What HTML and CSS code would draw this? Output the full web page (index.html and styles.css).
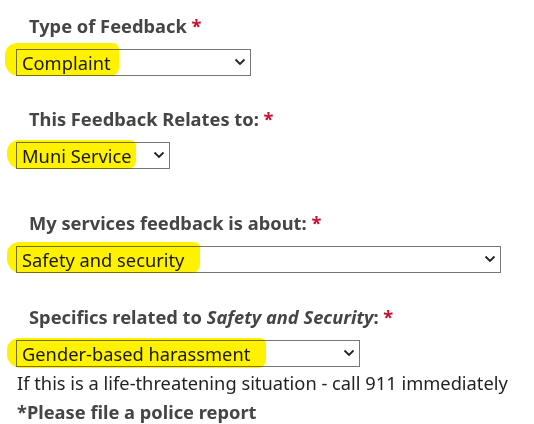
FILE: index.html
```html
<!DOCTYPE html>
<html lang="en">
<head>
    <meta charset="UTF-8">
    <meta name="viewport" content="width=device-width, initial-scale=1.0">
    <title>Feedback</title>
    <link rel="stylesheet" href="styles.css">
</head>
<body>
    <form class="feedback-form">
        <div class="field field-type">
            <label for="feedbackType">Type of Feedback <span class="req">*</span></label>
            <div class="select-wrap">
                <select id="feedbackType" class="select-type">
                    <option>Complaint</option>
                </select>
                <svg class="chevron" width="12" height="8" viewBox="0 0 12 8"><path d="M1.5 1.5 L6 6 L10.5 1.5" fill="none" stroke="#222" stroke-width="1.8"/></svg>
                <span class="marker marker-type"></span>
            </div>
        </div>
        <div class="field field-relates">
            <label for="relatesTo">This Feedback Relates to: <span class="req">*</span></label>
            <div class="select-wrap">
                <select id="relatesTo" class="select-relates">
                    <option>Muni Service</option>
                </select>
                <svg class="chevron" width="12" height="8" viewBox="0 0 12 8"><path d="M1.5 1.5 L6 6 L10.5 1.5" fill="none" stroke="#222" stroke-width="1.8"/></svg>
                <span class="marker marker-relates"></span>
            </div>
        </div>
        <div class="field field-about">
            <label for="aboutTopic">My services feedback is about: <span class="req">*</span></label>
            <div class="select-wrap">
                <select id="aboutTopic" class="select-about">
                    <option>Safety and security</option>
                </select>
                <svg class="chevron" width="12" height="8" viewBox="0 0 12 8"><path d="M1.5 1.5 L6 6 L10.5 1.5" fill="none" stroke="#222" stroke-width="1.8"/></svg>
                <span class="marker marker-about"></span>
            </div>
        </div>
        <div class="field field-specifics">
            <label for="specifics">Specifics related to <em>Safety and Security</em>: <span class="req">*</span></label>
            <div class="select-wrap">
                <select id="specifics" class="select-specifics">
                    <option>Gender-based harassment</option>
                </select>
                <svg class="chevron" width="12" height="8" viewBox="0 0 12 8"><path d="M1.5 1.5 L6 6 L10.5 1.5" fill="none" stroke="#222" stroke-width="1.8"/></svg>
                <span class="marker marker-specifics"></span>
            </div>
            <p class="note">If this is a life-threatening situation - call 911 immediately</p>
            <p class="note note-strong">*Please file a police report</p>
        </div>
    </form>
</body>
</html>
```

FILE: styles.css
```css
body {
    margin: 0;
    background-color: #fff;
    font-family: "Noto Sans", "Open Sans", sans-serif;
    color: #222;
}
.feedback-form {
    padding: 14px 0 0 16px;
}
.field label {
    display: block;
    margin: 0 0 11px 13px;
    font-size: 18.3px;
    line-height: 24px;
    font-weight: bold;
    color: #454545;
}
.field label em {
    font-style: italic;
}
.req {
    color: #c8102e;
}
.field-type {
    margin-bottom: 31px;
}
.field-relates {
    margin-bottom: 42px;
}
.field-about {
    margin-bottom: 32px;
}
.select-wrap {
    position: relative;
    width: fit-content;
}
select {
    display: block;
    box-sizing: border-box;
    height: 27px;
    padding: 0 0 0 5px;
    border: 1px solid #767676;
    border-radius: 0;
    background-color: #fff;
    appearance: none;
    font-family: inherit;
    font-size: 18.3px;
    color: #1a1a1a;
}
.select-type { width: 235px; }
.select-relates { width: 154px; }
.select-about { width: 485px; }
.select-specifics { width: 344px; }

.chevron {
    position: absolute;
    right: 5px;
    top: 9px;
    pointer-events: none;
}

/* highlighter strokes drawn over the screenshot */
.marker {
    position: absolute;
    z-index: 1;
    background-color: #fff200;
    mix-blend-mode: multiply;
    border-radius: 12px 6px 8px 14px;
    pointer-events: none;
}
.marker-type { left: -11px; top: -6px; width: 114px; height: 33px; }
.marker-relates { left: -9px; top: -2px; width: 129px; height: 29px; }
.marker-about { left: -9px; top: -4px; width: 193px; height: 31px; }
.marker-specifics { left: -9px; top: -2px; width: 259px; height: 30px; }

.note {
    margin: 4px 0 0 1px;
    font-size: 18.3px;
    line-height: 24px;
    color: #222;
}
.note-strong {
    margin-top: 5px;
    font-weight: bold;
    color: #454545;
}
```
